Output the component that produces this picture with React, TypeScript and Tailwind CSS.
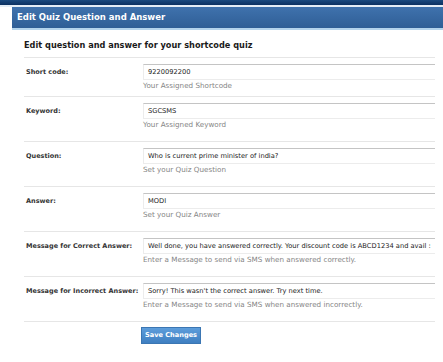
import React from "react";

const font = { fontFamily: '"DejaVu Sans", Verdana, sans-serif' };

type Row = { label: string; value: string; help: string; first?: boolean };

const rows: Row[] = [
  { label: "Short code:", value: "9220092200", help: "Your Assigned Shortcode", first: true },
  { label: "Keyword:", value: "SGCSMS", help: "Your Assigned Keyword" },
  { label: "Question:", value: "Who is current prime minister of india?", help: "Set your Quiz Question" },
  { label: "Answer:", value: "MODI", help: "Set your Quiz Answer" },
  {
    label: "Message for Correct Answer:",
    value: "Well done, you have answered correctly. Your discount code is ABCD1234 and avail :",
    help: "Enter a Message to send via SMS when answered correctly.",
  },
  {
    label: "Message for Incorrect Answer:",
    value: "Sorry! This wasn't the correct answer. Try next time.",
    help: "Enter a Message to send via SMS when answered incorrectly.",
  },
];

export default function App() {
  return (
    <div className="w-[443px] h-[362px] bg-white overflow-hidden" style={font}>
      <div className="h-[5px] bg-gradient-to-b from-[#1a4a80] to-[#0b3060]" />
      <div className="h-[2px] bg-[#e3edf6]" />
      <div className="ml-[12px]">
        <div className="h-[21px] bg-gradient-to-b from-[#3f72ad] to-[#2f5e96] flex items-center pl-[5px]">
          <span className="text-white font-bold text-[8.5px] leading-none">Edit Quiz Question and Answer</span>
        </div>
        <div className="h-[2px] bg-[#b3d3ec]" />
        <div className="pl-[12px] pr-[8px]">
          <div className="pt-[10px] pb-[7px] border-b border-[#e6e6e6]">
            <h1 className="font-bold text-[8.2px] leading-[10px] text-[#1a1a1a]">
              Edit question and answer for your shortcode quiz
            </h1>
          </div>
          {rows.map((r) => (
            <div
              key={r.label}
              className={`flex border-b border-[#e6e6e6] pt-[6px] ${r.first ? "pb-[4px]" : "pb-[10px]"}`}
            >
              <div className="w-[119px] shrink-0 pl-[2px] h-[16px] flex items-center">
                <span className="font-bold text-[6.5px] leading-none text-[#333333] whitespace-nowrap">{r.label}</span>
              </div>
              <div className="flex-1 min-w-0">
                <div className="h-[16px] border border-[#ececec] border-t-[#c4c4c4] border-r-0 bg-white flex items-center pl-[4px] overflow-hidden">
                  <span className="text-[6.7px] leading-none text-[#222222] whitespace-nowrap">{r.value}</span>
                </div>
                <div className="h-[12px] flex items-center text-[7.2px] leading-none text-[#858585] whitespace-nowrap">
                  {r.help}
                </div>
              </div>
            </div>
          ))}
          <div className="pt-[5px] pl-[117px]">
            <button className="w-[60px] h-[17px] bg-gradient-to-b from-[#5d9ddb] to-[#3f7fc1] border border-[#3b76b3] text-white font-bold text-[6.6px] leading-none flex items-center justify-center">
              Save Changes
            </button>
          </div>
        </div>
      </div>
    </div>
  );
}
